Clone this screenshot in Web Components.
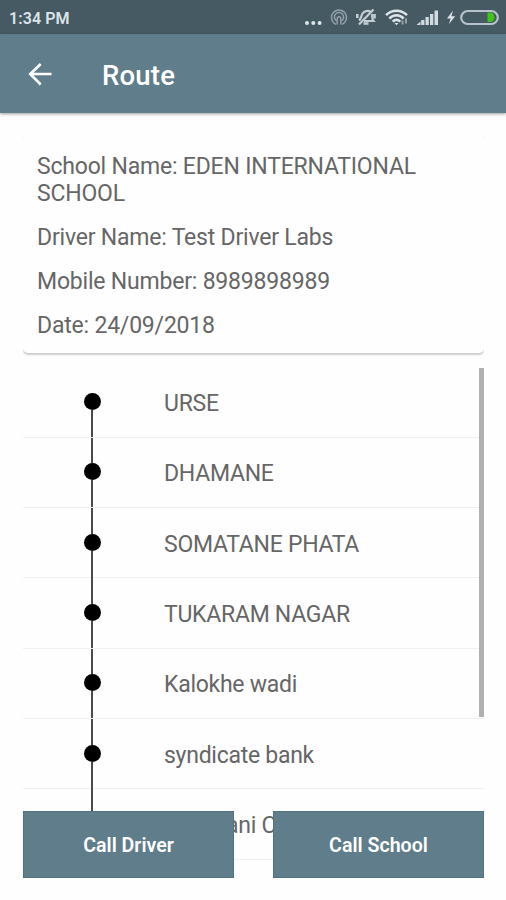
<!DOCTYPE html>
<html lang="en">
<head>
<meta charset="utf-8">
<title>Route</title>
<style>
  body {
    margin: 0;
    background: #fefefe;
    font-family: Roboto, sans-serif;
    color: #666;
  }
</style>
</head>
<body>
<route-page></route-page>

<script>
class StatusBar extends HTMLElement {
  constructor() {
    super();
    this.attachShadow({ mode: 'open' });
  }

  connectedCallback() {
    this.shadowRoot.innerHTML = `
      <style>
        :host {
          display: flex;
          justify-content: space-between;
          height: 34px;
          background: #465a63;
          color: #dce4ea;
        }
        span {
          padding-left: 9px;
          font-size: 16px;
          font-weight: 600;
          line-height: 37px;
          letter-spacing: 0.1px;
        }
        svg { display: block; }
      </style>
      <span><slot></slot></span>
      <svg width="206" height="34" viewBox="300 0 206 34" fill="none" stroke="#c3cdd4">
        <!-- more -->
        <g fill="#dce4ea" stroke="none">
          <circle cx="307" cy="23" r="2"/><circle cx="313.3" cy="23" r="2"/><circle cx="319.6" cy="23" r="2"/>
        </g>
        <!-- hotspot -->
        <g stroke="#93a2aa" stroke-width="1.4">
          <path d="M336 24.4a7.5 7.5 0 1 1 6 0"/>
          <path d="M336.6 21a4.6 4.6 0 1 1 4.8 0"/>
          <path d="M337.2 24.5v-6a1.8 1.8 0 1 1 3.6 0v6"/>
        </g>
        <!-- muted bell -->
        <g stroke-width="2.2">
          <path d="M359 20.5c2.500-2 2-4.500 3.500-7c1.600-2.600 5.500-3.400 8.500-1.500"/>
          <path d="M372 14c.6 2.500-.5 4.500 1.500 7h-9.500"/>
          <path d="M359 24.5l14.500-15"/>
          <path d="M363.500 23.500h5" stroke-width="2.600"/>
          <path d="M357.300 14v4M374.500 14v4.500" stroke-width="2.600"/>
        </g>
        <!-- wifi -->
        <g stroke="#dce4ea" stroke-width="2.5">
          <path d="M386 15.200c6-6 15-6 21 0"/>
          <path d="M389.300 18.500c4.200-4.200 10.200-4.200 14.400 0"/>
          <path d="M392.700 21.700c2.300-2.200 5.300-2.200 7.600 0"/>
          <path d="M394.500 23l2 2.200 2-2.200z" fill="#dce4ea" stroke="none"/>
          <path d="M402.500 24.500v-4M406 18.500v5" stroke="#93a2aa" stroke-width="2"/>
        </g>
        <!-- signal -->
        <g fill="#d2dbe1" stroke="none">
          <path d="M416.500 25l4-3.500v3.500z"/>
          <rect x="421.200" y="20" width="3.200" height="5"/>
          <rect x="425.500" y="17" width="3.300" height="8"/>
          <rect x="430" y="14" width="3.300" height="11"/>
          <rect x="434.500" y="10.500" width="3.500" height="14.500"/>
        </g>
        <!-- charging -->
        <path d="M453 10.500l-6 8h3.600l-1.600 5.500 6.200-7.800h-3.800z" fill="#dce4ea" stroke="none"/>
        <!-- battery -->
        <path d="M487.500 12.500h3.500a5 5 0 0 1 0 9.500h-3.500z" fill="#3fc512" stroke="none"/>
        <rect x="461.200" y="11" width="36.600" height="13" rx="6.500" stroke="#b7c3cb" stroke-width="2.200"/>
      </svg>`;
  }
}
customElements.define('status-bar', StatusBar);

class AppBar extends HTMLElement {
  constructor() {
    super();
    this.attachShadow({ mode: 'open' });
  }

  connectedCallback() {
    this.shadowRoot.innerHTML = `
      <style>
        :host {
          display: flex;
          align-items: center;
          height: 79px;
          box-sizing: border-box;
          padding: 2px 0 0 28px;
          background: #607d8b;
          box-shadow: 0 1px 3px rgba(0, 0, 0, .4);
          color: #fff;
        }
        h1 {
          margin: 2px 0 0 50px;
          font-size: 27.5px;
          font-weight: 500;
          line-height: 32px;
          letter-spacing: 0.2px;
        }
      </style>
      <svg width="24" height="24" viewBox="0 0 24 24" fill="none" stroke="#fff" stroke-width="2.600">
        <path d="M23.500 11H3M12.700 1L2.200 11l10.500 10.500"/>
      </svg>
      <h1><slot></slot></h1>`;
  }
}
customElements.define('app-bar', AppBar);

class InfoCard extends HTMLElement {
  constructor() {
    super();
    this.attachShadow({ mode: 'open' });
  }

  connectedCallback() {
    this.shadowRoot.innerHTML = `
      <style>
        :host {
          display: flex;
          flex-direction: column;
          gap: 17.6px;
          box-sizing: border-box;
          height: 218px;
          padding: 19px 14px 0;
          border-radius: 5px;
          background: #fefefe;
          box-shadow: 0 1.5px 2px #ccc;
          clip-path: inset(0 0 -4px);
          font-size: 23px;
          line-height: 26.5px;
          letter-spacing: -0.2px;
        }
        ::slotted(p) { margin: 0; }
      </style>
      <slot></slot>`;
  }
}
customElements.define('info-card', InfoCard);

class RouteStop extends HTMLElement {
  constructor() {
    super();
    this.attachShadow({ mode: 'open' });
  }

  connectedCallback() {
    this.shadowRoot.innerHTML = `
      <style>
        :host {
          display: grid;
          grid-template-columns: 138px 1fr;
          column-gap: 3px;
          height: 70.35px;
          box-sizing: border-box;
          border-bottom: 1.5px solid #f0f0f0;
          font-size: 23px;
          letter-spacing: -0.27px;
        }
        .track {
          display: flex;
          flex-direction: column;
          align-items: center;
        }
        .track i {
          width: 2px;
          flex: 1;
          background: #4a4a4a;
        }
        .track i:first-child { flex: 0 0 25.5px; }
        .track b {
          width: 17px;
          height: 17px;
          border-radius: 50%;
          background: #000;
        }
        :host([first]) i:first-child { background: none; }
        .name {
          padding-top: 2.6px;
          line-height: 67px;
          white-space: nowrap;
        }
        /* row whose name is partly under the buttons */
        :host([covered]) .name { padding-left: 62px; }
      </style>
      <div class="track"><i></i><b></b><i></i></div>
      <div class="name"><slot></slot></div>`;
  }
}
customElements.define('route-stop', RouteStop);

class RouteList extends HTMLElement {
  constructor() {
    super();
    this.attachShadow({ mode: 'open' });
  }

  connectedCallback() {
    this.shadowRoot.innerHTML = `
      <style>
        :host {
          display: block;
          position: relative;
          margin-top: 14.4px;
        }
        .thumb {
          position: absolute;
          top: 1px;
          right: 0;
          width: 5.5px;
          height: 349px;
          background: #b1b1b1;
        }
      </style>
      <slot></slot>
      <div class="thumb"></div>`;
  }
}
customElements.define('route-list', RouteList);

class CallButton extends HTMLElement {
  constructor() {
    super();
    this.attachShadow({ mode: 'open' });
  }

  connectedCallback() {
    this.shadowRoot.innerHTML = `
      <style>
        :host { display: block; }
        button {
          display: block;
          width: 100%;
          height: 67px;
          padding: 1px 0 0;
          border: 1px solid #527282;
          background: #607d8b;
          color: #fff;
          font: 600 19.6px Roboto, sans-serif;
        }
      </style>
      <button><slot></slot></button>`;
  }
}
customElements.define('call-button', CallButton);

class RoutePage extends HTMLElement {
  constructor() {
    super();
    this.attachShadow({ mode: 'open' });
  }

  connectedCallback() {
    this.shadowRoot.innerHTML = `
      <style>
        :host {
          display: block;
          position: relative;
          height: 900px;
          overflow: hidden;
        }
        main { padding: 22px 22px 0 23px; }
        .actions {
          position: absolute;
          left: 23px;
          right: 22px;
          bottom: 22px;
          display: grid;
          grid-template-columns: 1fr 1fr;
          gap: 39px;
        }
      </style>
      <status-bar>1:34 PM</status-bar>
      <app-bar>Route</app-bar>
      <main>
        <info-card>
          <p>School Name: EDEN INTERNATIONAL SCHOOL</p>
          <p>Driver Name: Test Driver Labs</p>
          <p>Mobile Number: 8989898989</p>
          <p>Date: 24/09/2018</p>
        </info-card>
        <route-list>
          <route-stop first>URSE</route-stop>
          <route-stop>DHAMANE</route-stop>
          <route-stop>SOMATANE PHATA</route-stop>
          <route-stop>TUKARAM NAGAR</route-stop>
          <route-stop>Kalokhe wadi</route-stop>
          <route-stop>syndicate bank</route-stop>
          <route-stop covered>ani C</route-stop>
        </route-list>
      </main>
      <div class="actions">
        <call-button>Call Driver</call-button>
        <call-button>Call School</call-button>
      </div>`;
  }
}
customElements.define('route-page', RoutePage);
</script>
</body>
</html>
